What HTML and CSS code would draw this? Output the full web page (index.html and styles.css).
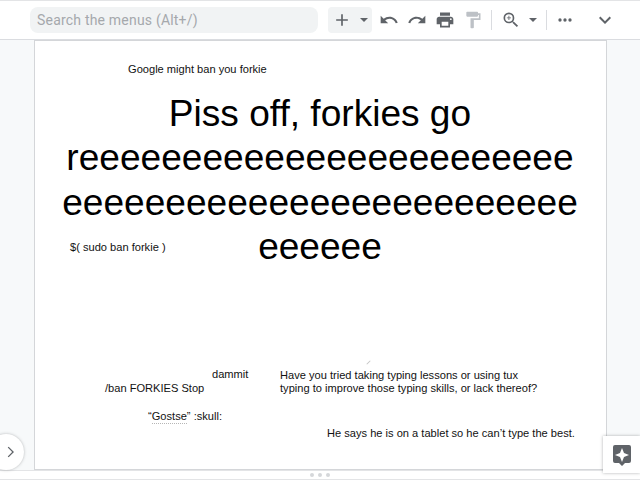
FILE: index.html
```html
<!DOCTYPE html>
<html lang="en">
<head>
<meta charset="utf-8">
<title>Presentation</title>
<link rel="stylesheet" href="styles.css">
</head>
<body>
<div class="app">
  <header class="toolbar">
    <div class="search">Search the menus (Alt+/)</div>
    <div class="insert">
      <svg class="ic" viewBox="0 0 24 24"><path d="M19 13h-6v6h-2v-6H5v-2h6V5h2v6h6z"/></svg>
      <svg class="caret" viewBox="0 0 10 5"><path d="M0 0h10L5 5z"/></svg>
    </div>
    <svg class="ic undo" viewBox="0 0 24 24"><path d="M12.500 8c-2.650 0-5.050 1-6.900 2.600L2 7v9h9l-3.620-3.620A7.950 7.950 0 0 1 12.500 10.500c3.540 0 6.550 2.310 7.600 5.500l2.370-.78C21.080 11.030 17.150 8 12.500 8z"/></svg>
    <svg class="ic" viewBox="0 0 24 24"><path d="M18.400 10.600C16.550 9 14.150 8 11.500 8c-4.650 0-8.580 3.030-9.960 7.220L3.900 16a8 8 0 0 1 7.600-5.500c1.950 0 3.730.72 5.120 1.880L13 16h9V7z"/></svg>
    <svg class="ic" viewBox="0 0 24 24"><path d="M19 8H5c-1.660 0-3 1.340-3 3v6h4v4h12v-4h4v-6c0-1.660-1.340-3-3-3zm-3 11H8v-5h8zm3-7a1 1 0 1 1 0-2 1 1 0 0 1 0 2zM18 3H6v4h12z"/></svg>
    <svg class="ic faded" viewBox="0 0 24 24"><path d="M18 4V3a1 1 0 0 0-1-1H5a1 1 0 0 0-1 1v4a1 1 0 0 0 1 1h12a1 1 0 0 0 1-1V6h1v4H9v11a1 1 0 0 0 1 1h2a1 1 0 0 0 1-1v-9h8V4z"/></svg>
    <span class="sep"></span>
    <svg class="ic zoom" viewBox="0 0 24 24"><path d="M15.500 14h-.79l-.28-.27A6.470 6.470 0 0 0 16 9.500 6.500 6.500 0 1 0 9.500 16c1.610 0 3.090-.59 4.230-1.570l.27.28v.79l5 4.990L20.490 19zm-6 0A4.500 4.500 0 1 1 14 9.500 4.490 4.490 0 0 1 9.500 14zM12 10h-2v2H9v-2H7V9h2V7h1v2h2z"/></svg>
    <svg class="caret zoom-caret" viewBox="0 0 10 5"><path d="M0 0h10L5 5z"/></svg>
    <span class="sep sep-last"></span>
    <svg class="ic" viewBox="0 0 24 24"><path d="M6 10a2 2 0 1 0 0 4 2 2 0 0 0 0-4zm12 0a2 2 0 1 0 0 4 2 2 0 0 0 0-4zm-6 0a2 2 0 1 0 0 4 2 2 0 0 0 0-4z"/></svg>
    <svg class="ic collapse" viewBox="0 0 24 24"><path d="M7.410 8.590 12 13.170l4.590-4.580L18 10l-6 6-6-6z"/></svg>
  </header>

  <main class="canvas">
    <section class="slide">
      <p class="box b-google">Google might ban you forkie</p>
      <h1 class="title">
        <span>Piss off, forkies go</span>
        <span>reeeeeeeeeeeeeeeeeeeeeeee</span>
        <span>eeeeeeeeeeeeeeeeeeeeeeeee</span>
        <span>eeeeee</span>
      </h1>
      <p class="box b-sudo">$( sudo ban forkie )</p>
      <p class="box b-dammit">dammit</p>
      <p class="box b-ban">/ban FORKIES Stop</p>
      <p class="box b-tux">Have you tried taking typing lessons or using tux<br>typing to improve those typing skills, or lack thereof?</p>
      <p class="box b-gostse">“<span class="squiggle">Gostse</span>” :skull:</p>
      <p class="box b-tablet">He says he is on a tablet so he can’t type the best.</p>
      <span class="tick"></span>
    </section>
    <button class="side-toggle" aria-label="Show filmstrip">
      <svg viewBox="0 0 24 24"><path d="M8.600 5.400 10 4l8 8-8 8-1.400-1.400 6.600-6.600z"/></svg>
    </button>
    <button class="explore" aria-label="Explore">
      <svg viewBox="0 0 24 24"><path fill-rule="evenodd" d="M5 2h14a2 2 0 0 1 2 2v14a2 2 0 0 1-2 2h-4l-3 3-3-3H5a2 2 0 0 1-2-2V4a2 2 0 0 1 2-2zm7 3-2 5-5 2 5 2 2 5 2-5 5-2-5-2z"/></svg>
    </button>
  </main>

  <footer class="notes-handle"><i></i><i></i><i></i></footer>
</div>
</body>
</html>
```
FILE: styles.css
```css
* { box-sizing: border-box; }
html, body { margin: 0; height: 100%; overflow: hidden; }
body { font-family: "Liberation Sans", Arial, sans-serif; color: #000; background: #fff; }

.app { width: 640px; height: 480px; display: flex; flex-direction: column; }

.toolbar {
  height: 40px;
  flex: none;
  display: flex;
  align-items: center;
  background: #fff;
  border-top: 1px solid #e3e4e6;
  border-bottom: 1px solid #dadce0;
  padding-left: 30px;
  color: #5f6368;
}
.search {
  width: 288px;
  height: 26px;
  margin-right: 10px;
  padding-left: 7px;
  background: #f1f3f4;
  border-radius: 8px;
  color: #a5a8ac;
  font: 14px/26px Roboto, sans-serif;
  letter-spacing: .2px;
}
.insert {
  width: 44px;
  height: 26px;
  display: flex;
  align-items: center;
  background: #f1f3f4;
  border-radius: 4px;
  padding-left: 4px;
}
.ic { width: 20px; height: 20px; flex: none; fill: #5f6368; margin-left: 8px; }
.insert .ic { margin-left: 0; margin-right: 8px; }
.undo { margin-left: 7px; }
.caret { width: 8px; height: 4px; flex: none; fill: #5f6368; }
.faded { fill: #bdc1c6; }
.sep { width: 1px; height: 20px; background: #dadce0; margin-left: 8px; flex: none; }
.zoom { margin-left: 9px; }
.zoom-caret { margin-left: 8px; }
.sep-last { margin-left: 9px; }
.collapse { margin-left: 18px; width: 24px; height: 24px; }

.canvas { position: relative; flex: 1; background: #f7f9fa; }
.slide {
  position: absolute;
  left: 34px;
  top: 1px;
  width: 573px;
  height: 429px;
  background: #fff;
  border: 1px solid #d4d6d9;
  border-width: 0 1px 1px;
  box-shadow: 0 -1px 0 #d4d6d9;
}

.box { position: absolute; margin: 0; font-size: 11.1px; line-height: 13px; color: #111; white-space: nowrap; }
.b-google { left: 93px; top: 22px; }
.b-sudo { left: 35px; top: 200px; }
.b-dammit { left: 177px; top: 327px; }
.b-ban { left: 70px; top: 341px; }
.b-tux { left: 245px; top: 328px; }
.b-gostse { left: 113px; top: 369px; }
.b-tablet { left: 292px; top: 386px; }
.squiggle { border-bottom: 1px dotted #b6b6b6; padding-bottom: 1px; }

.title {
  position: absolute;
  left: 26px;
  top: 50px;
  width: 518px;
  margin: 0;
  display: flex;
  flex-direction: column;
  align-items: center;
  font-size: 37.1px;
  font-weight: 400;
  line-height: 44.400px;
  color: #000;
  white-space: nowrap;
}

.tick { position: absolute; left: 331px; top: 321px; width: 5px; height: 1px; background: #c4c4c4; transform: rotate(-45deg); }

.side-toggle {
  position: absolute;
  left: -12px;
  top: 394px;
  width: 36px;
  height: 36px;
  padding: 0 0 0 14px;
  border: 0;
  border-radius: 50%;
  background: #fff;
  box-shadow: 0 0 3px rgba(60, 64, 67, .35);
  display: flex;
  align-items: center;
}
.side-toggle svg { width: 16px; height: 16px; fill: #5f6368; }

.explore {
  position: absolute;
  left: 603px;
  top: 396px;
  width: 37px;
  height: 37px;
  padding: 0;
  border: 0;
  background: #fff;
  box-shadow: 0 0 3px rgba(60, 64, 67, .4);
  display: flex;
  align-items: center;
  justify-content: center;
}
.explore svg { width: 24px; height: 24px; fill: #5f6368; }

.notes-handle {
  height: 10px;
  flex: none;
  display: flex;
  justify-content: center;
  align-items: center;
  gap: 4px;
  background: #fff;
  border-top: 1px solid #e3e4e6;
  border-bottom: 1px solid #e3e4e6;
}
.notes-handle i { width: 4px; height: 4px; border-radius: 50%; background: #d5d7da; }
```
